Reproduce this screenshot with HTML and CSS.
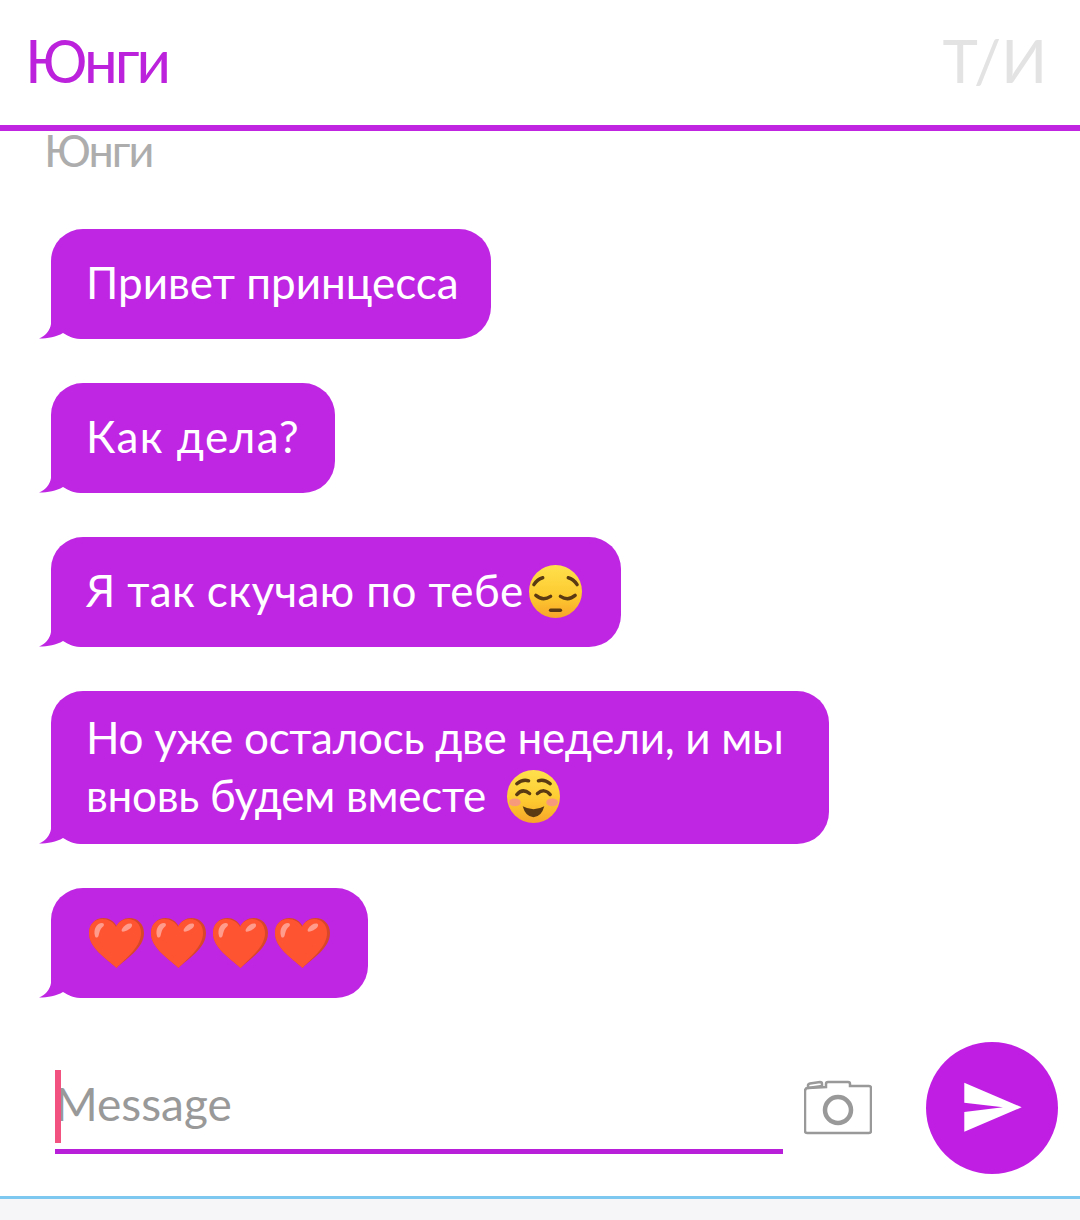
FILE: index.html
```html
<!DOCTYPE html>
<html lang="ru">
<head>
  <meta charset="UTF-8">
  <meta name="viewport" content="width=device-width, initial-scale=1.0">
  <title>Юнги</title>
  <link rel="stylesheet" href="styles.css">
</head>
<body>
  <svg class="defs" width="0" height="0" aria-hidden="true">
    <defs>
      <linearGradient id="face" x1="0" y1="0" x2="0" y2="1">
        <stop offset="0" stop-color="#ffe14d"/>
        <stop offset="0.6" stop-color="#fdc92f"/>
        <stop offset="1" stop-color="#f7a42a"/>
      </linearGradient>
      <symbol id="heart" viewBox="0 0 55 50">
        <path fill="#d9472a" d="M27.500 50C17 40 0 30 0 15 0 6 6.500 0 14.500 0 20 0 25 3 27.500 8 30 3 35 0 40.500 0 48.500 0 55 6 55 15 55 30 38 40 27.500 50Z"/>
        <path fill="#ff5432" d="M27.500 50C17 40 0 30 0 15 0 6 6 1 13 1 19 1 24.500 4 27 9 29 4 34 1 39 1 46 1 52 6 52 15 52 29 37 40 27.500 50Z"/>
        <path fill="#ff9c8c" d="M6 18C4 11 8 5 13 5 15.500 5 15.500 8 13.500 9 11 11 10.500 14 9.500 18 8.500 20 6.500 20 6 18Z"/>
        <path fill="#ff9c8c" d="M33 11C35 7 39 5 42 5.500 44 6.500 43 9 41 10.500 39 12 37 13 35 13.500 33 14 32 13 33 11Z"/>
      </symbol>
    </defs>
  </svg>

  <header class="topbar">
    <span class="topbar-name">Юнги</span>
    <span class="topbar-other">Т/И</span>
  </header>

  <main class="chat">
    <div class="sender">Юнги</div>
    <div class="messages">
      <div class="bubble bubble-hello"><p class="bubble-text">Привет принцесса</p></div>
      <div class="bubble bubble-how"><p class="bubble-text">Как дела?</p></div>
      <div class="bubble bubble-miss">
        <p class="bubble-text">Я так скучаю по тебе<svg class="emoji emoji-sad" viewBox="0 0 56 56" aria-hidden="true">
          <circle cx="28" cy="28" r="27" fill="url(#face)"/>
          <path class="emoji-line" d="M6 21Q10 15 15 14M41 14Q46 15 50 21"/>
          <path class="emoji-line" d="M8 32Q15 38 23 33M33 33Q41 38 48 32"/>
          <path class="emoji-line" d="M23 47H33"/>
        </svg></p>
      </div>
      <div class="bubble bubble-weeks">
        <p class="bubble-text">Но уже осталось две недели, и мы<br>вновь будем вместе <svg class="emoji emoji-smile" viewBox="0 0 56 56" aria-hidden="true">
          <circle cx="28" cy="28" r="27" fill="url(#face)"/>
          <ellipse cx="9" cy="34" rx="6" ry="4" fill="#f79a7c"/>
          <ellipse cx="47" cy="34" rx="6" ry="4" fill="#f79a7c"/>
          <path class="emoji-line" d="M11 15Q17 10 23 12M33 12Q39 10 45 15"/>
          <path class="emoji-line" d="M11 26Q17 19 24 25M32 25Q39 19 45 26"/>
          <path fill="#5a3a12" d="M17 38Q28 44 39 38 36 49 28 49 20 49 17 38Z"/>
        </svg></p>
      </div>
      <div class="bubble bubble-hearts">
        <p class="hearts">
          <svg class="heart"><use href="#heart"/></svg>
          <svg class="heart"><use href="#heart"/></svg>
          <svg class="heart"><use href="#heart"/></svg>
          <svg class="heart"><use href="#heart"/></svg>
        </p>
      </div>
    </div>
  </main>

  <footer class="composer">
    <div class="field">
      <span class="caret"></span>
      <span class="placeholder">Message</span>
    </div>
    <svg class="camera" viewBox="0 0 68 56" aria-label="Камера">
      <path d="M22 8V5Q22 3 24 3H44Q46 3 46 5V7H65Q67 7 67 9V52Q67 54 65 54H3Q1 54 1 52V12Q1 9 4 9Z"/>
      <path d="M4 9V6.500Q4 5 6 4.500L16 3Q18 3 18 5V7L4 9"/>
      <circle class="camera-lens" cx="34" cy="31" r="13"/>
    </svg>
    <button class="send" aria-label="Отправить">
      <svg viewBox="0 0 132 132"><path fill="#fff" d="M38.300 40.700L95.700 65.300 38.300 89.700V70L77 65.300 38.300 60.700Z"/></svg>
    </button>
  </footer>
  <div class="nav-strip"></div>
</body>
</html>
```

FILE: styles.css
```css
* { box-sizing: border-box; }
body { margin: 0; width: 1080px; height: 1220px; background: #fff; font-family: 'Lato', 'Open Sans', sans-serif; display: flex; flex-direction: column; overflow: hidden; }
.defs { position: absolute; }

/* шапка */
.topbar { height: 131px; flex: none; padding: 18px 33px 0 25px; display: flex; justify-content: space-between; align-items: flex-start; border-bottom: 6px solid #c026e2; font-size: 60px; line-height: 84px; }
.topbar-name { color: #bc22dc; letter-spacing: -3px; }
.topbar-other { color: #e3e3e3; }

.chat { flex: 1; padding-left: 51px; }
.sender { margin-left: -7px; height: 98px; font-size: 45px; line-height: 38px; letter-spacing: -2px; color: #adadad; }
.messages { display: flex; flex-direction: column; align-items: flex-start; gap: 44px; }

/* сообщения */
.bubble { position: relative; min-height: 110px; padding: 16px 35px 20px; display: flex; align-items: center; background: #bf26e3; border-radius: 32px; color: #fff; }
.bubble::after { content: ''; position: absolute; left: -12px; bottom: 0; width: 50px; height: 34px; background: #bf26e3; clip-path: path('M12 0V19C11 26 6 31 0 33.500 9 33.500 17 32 24 28 29 31 35 34 42 34H50V0Z'); }
.bubble-hello { width: 440px; }
.bubble-how { width: 284px; letter-spacing: 1.400px; }
.bubble-miss { width: 570px; letter-spacing: 0.400px; }
.bubble-weeks { width: 778px; min-height: 153px; letter-spacing: -0.300px; }
.bubble-hearts { width: 317px; }
.bubble-text { margin: 0; font-size: 44px; line-height: 58px; white-space: nowrap; }
.emoji { width: 55px; height: 55px; vertical-align: -12px; }
.emoji-sad { margin-left: 4px; }
.emoji-smile { margin-left: 9px; }
.emoji-line { fill: none; stroke: #5a3a12; stroke-width: 3.500; stroke-linecap: round; }
.hearts { margin: 4px 0 0 3px; display: flex; gap: 7px; }
.heart { width: 55px; height: 50px; }

/* поле ввода */
.composer { flex: none; height: 154px; padding: 0 22px 0 55px; display: flex; align-items: flex-start; }
.field { position: relative; width: 728px; height: 84px; margin-top: 28px; border-bottom: 5px solid #b81fd8; padding: 7px 0 0; font-size: 46px; line-height: 54px; }
.caret { position: absolute; left: 0; top: 0; width: 6px; height: 73px; background: #f2527f; }
.placeholder { color: #999; }
.camera { width: 68px; height: 56px; margin: 37px 54px 0 21px; fill: none; stroke: #999; stroke-width: 2.500; }
.camera-lens { stroke-width: 4.500; }
.send { width: 132px; height: 132px; padding: 0; border: 0; border-radius: 50%; background: #c01fe3; flex: none; }
.send svg { display: block; }
.nav-strip { flex: none; height: 24px; background: #f6f6f8; border-top: 3px solid #7cc8f0; }
```
